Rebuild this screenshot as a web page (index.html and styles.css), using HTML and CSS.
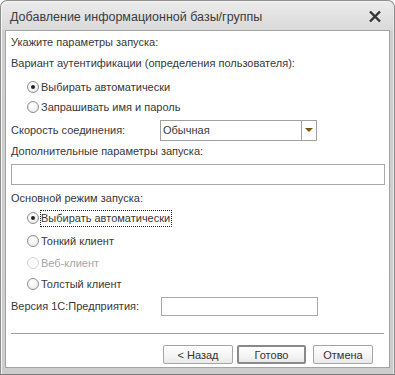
FILE: index.html
```html
<!DOCTYPE html>
<html lang="ru">
<head>
  <meta charset="UTF-8" />
  <title>Добавление информационной базы/группы</title>
  <link rel="stylesheet" href="styles.css">
</head>
<body>

<div class="window">
  <!-- Title bar -->
  <div class="titlebar">
    <span class="title">Добавление информационной базы/группы</span>
    <svg class="close" width="14" height="13" viewBox="0 0 14 13">
      <path d="M2 1.5 L12 11.5 M12 1.5 L2 11.5" stroke="#333" stroke-width="2.4" fill="none"/>
    </svg>
  </div>

  <div class="client">
    <div class="row">Укажите параметры запуска:</div>
    <div class="row row-auth">Вариант аутентификации (определения пользователя):</div>

    <div class="radio radio-first checked"><span class="dot"></span>Выбирать автоматически</div>
    <div class="radio"><span class="dot"></span>Запрашивать имя и пароль</div>

    <div class="field field-speed">
      <span class="field-label">Скорость соединения:</span>
      <div class="combo">
        <span class="combo-text">Обычная</span>
        <span class="combo-btn"><span class="arrow"></span></span>
      </div>
    </div>

    <div class="row row-extra">Дополнительные параметры запуска:</div>
    <div class="input input-wide"></div>

    <div class="row row-mode">Основной режим запуска:</div>
    <div class="radio checked"><span class="dot"></span><span class="focus">Выбирать автоматически</span></div>
    <div class="radio radio-thin"><span class="dot"></span>Тонкий клиент</div>
    <div class="radio radio-web disabled"><span class="dot"></span>Веб-клиент</div>
    <div class="radio radio-thick"><span class="dot"></span>Толстый клиент</div>

    <div class="field field-version">
      <span class="field-label">Версия 1С:Предприятия:</span>
      <div class="input input-version"></div>
    </div>

    <div class="separator"></div>

    <div class="buttons">
      <button class="btn btn-back">&lt; Назад</button>
      <button class="btn btn-default">Готово</button>
      <button class="btn btn-cancel">Отмена</button>
    </div>
  </div>
</div>

</body>
</html>
```

FILE: styles.css
```css
* {
  margin: 0;
  padding: 0;
  box-sizing: border-box;
}

body {
  width: 395px;
  height: 375px;
  background: #fff;
  font-family: 'Liberation Sans', Arial, sans-serif;
  font-size: 11px;
  color: #383838;
}

.window {
  width: 395px;
  height: 375px;
  border: 1px solid #8e8e8e;
  border-bottom-color: #7a7a7a;
  border-radius: 7px 7px 0 0;
  background: linear-gradient(to bottom, #ececec 0px, #d9d9d9 29px, #d0d0d0 30px, #cdcdcd 100%);
  padding: 0 4px 6px 4px;
  display: flex;
  flex-direction: column;
  box-shadow: inset 1px 1px 0 #f4f4f4, inset -1px 0 0 #e6e6e6;
}

.titlebar {
  height: 29px;
  display: flex;
  align-items: center;
  justify-content: space-between;
  padding: 0 8px 0 5px;
}

.title {
  color: #3c3c3c;
  font-size: 12.5px;
  margin-top: 2px;
}

.close {
  margin-top: 2px;
}

.client {
  flex: 1;
  background: #fff;
  border: 1px solid #a3a3a3;
  padding: 1px 4px 0 5px;
  display: flex;
  flex-direction: column;
}

.row {
  height: 20px;
  line-height: 20px;
  white-space: nowrap;
}

.row-auth { margin-top: 1px; }
.row-extra { margin-top: 1px; }
.row-mode { margin-top: 3px; }

.radio {
  height: 20px;
  display: flex;
  align-items: center;
  padding-left: 16px;
  white-space: nowrap;
}

.radio-first { margin-top: 4px; }
.radio-thin { margin-top: 3px; }
.radio-web { margin-top: 2px; }
.radio-thick { margin-top: 1px; }

.dot {
  width: 12px;
  height: 12px;
  border-radius: 50%;
  border: 1px solid #8f8f8f;
  background: radial-gradient(circle at 40% 35%, #ffffff 0%, #f3f3f3 55%, #dedede 100%);
  margin-right: 2px;
  position: relative;
  flex: none;
}

.checked .dot::after {
  content: '';
  position: absolute;
  left: 3px;
  top: 3px;
  width: 4px;
  height: 4px;
  border-radius: 50%;
  background: #222;
}

.disabled {
  color: #a6a6a6;
}

.disabled .dot {
  border-color: #d6d6d6;
  background: #fbfbfb;
}

.focus {
  outline: 1px dotted #222;
  line-height: 14px;
  padding: 0 1px 1px 0;
}

.field {
  display: flex;
  align-items: center;
  height: 20px;
}

.field-speed { margin-top: 3px; }
.field-version { margin-top: 2px; }

.field-label {
  width: 149px;
  flex: none;
  white-space: nowrap;
}

.combo {
  width: 157px;
  height: 21px;
  border: 1px solid #a0a0a0;
  display: flex;
  align-items: center;
}

.combo-text {
  flex: 1;
  padding-left: 2px;
}

.combo-btn {
  width: 15px;
  height: 100%;
  border-left: 1px solid #a0a0a0;
  display: flex;
  align-items: center;
  justify-content: center;
}

.arrow {
  width: 0;
  height: 0;
  border-left: 4px solid transparent;
  border-right: 4px solid transparent;
  border-top: 4px solid #76560a;
}

.input {
  border: 1px solid #a8a8a8;
  background: #fff;
}

.input-wide {
  height: 21px;
  margin-top: 3px;
}

.input-version {
  width: 157px;
  height: 19px;
  margin-left: 1px;
}

.separator {
  height: 1px;
  background: #a0a0a0;
  margin-top: 17px;
  margin-right: 1px;
}

.buttons {
  display: flex;
  justify-content: flex-end;
  margin-top: 11px;
  padding-right: 12px;
}

.btn {
  height: 19px;
  font-family: 'Liberation Sans', Arial, sans-serif;
  font-size: 11px;
  color: #333;
  border: 1px solid #a5a5a5;
  border-radius: 2px;
  background: linear-gradient(to bottom, #ffffff 0%, #f4f4f4 60%, #e9e9e9 100%);
}

.btn-back { width: 70px; }

.btn-default {
  width: 69px;
  margin-left: 4px;
  border: 2px solid #8a8a8a;
}

.btn-cancel {
  width: 60px;
  margin-left: 7px;
}
```
